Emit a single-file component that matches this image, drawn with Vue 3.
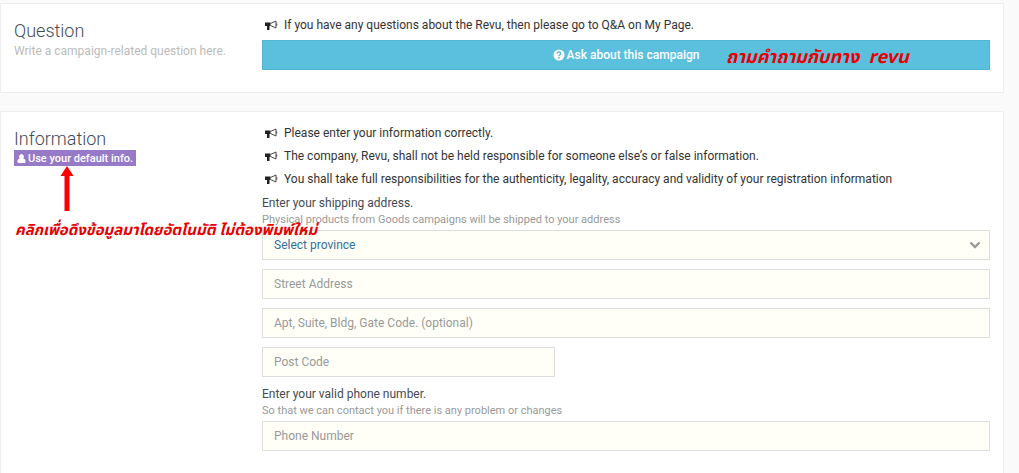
<script setup>
import { ref } from 'vue'

const notices = [
  'Please enter your information correctly.',
  'The company, Revu, shall not be held responsible for someone else’s or false information.',
  'You shall take full responsibilities for the authenticity, legality, accuracy and validity of your registration information',
]
const province = ref('')
const street = ref('')
const apt = ref('')
const postCode = ref('')
const phone = ref('')
</script>

<template>
  <main class="page">
    <section class="panel">
      <div class="side">
        <h2>Question</h2>
        <p class="sub">Write a campaign-related question here.</p>
      </div>
      <div class="body">
        <ul class="notices">
          <li>
            <svg class="horn" viewBox="0 0 13 11" aria-hidden="true">
              <path d="M0 2.500h5.500v3.500H4.500V10H2V6H0z" fill="#222" />
              <path d="M5.500 3.500L11 1v7L5.500 5.500M11.800 3.500v2" fill="none" stroke="#444" />
            </svg>
            <span>If you have any questions about the Revu, then please go to Q&amp;A on My Page.</span>
          </li>
        </ul>
        <div class="ask-row">
          <button type="button" class="ask">
            <svg class="help" viewBox="0 0 12 12" aria-hidden="true">
              <circle cx="6" cy="6" r="5.500" fill="#fff" />
              <path d="M4.200 4.600Q4.400 3 6 3T7.800 4.500Q7.800 5.300 6.900 5.800T6 7" fill="none" stroke="#5bc0de" stroke-width="1.500" />
              <path d="M5.200 8h1.600v1.500H5.200z" fill="#5bc0de" />
            </svg>
            <span>Ask about this campaign</span>
          </button>
          <span class="note note-ask" lang="th">ถามคำถามกับทาง &nbsp;revu</span>
        </div>
      </div>
    </section>

    <section class="panel grow">
      <div class="side">
        <h2>Information</h2>
        <div class="default-wrap">
          <button type="button" class="default">
            <svg class="user" viewBox="0 0 10 10" aria-hidden="true">
              <path d="M5 0a2.600 2.900 0 0 1 1.800 5Q9.500 5.300 9.500 8.500 9.500 10 8 10H2Q.5 10 .5 8.500.5 5.300 3.200 5A2.600 2.900 0 0 1 5 0z" fill="#fff" />
            </svg>
            <span>Use your default info.</span>
          </button>
          <div class="callout">
            <svg class="arrow" viewBox="0 0 14 46" aria-hidden="true">
              <path d="M7 0l6.500 10H9.500v35h-5V10H.5z" fill="#f00" />
            </svg>
            <span class="note note-info" lang="th">คลิกเพื่อดึงข้อมูลมาโดยอัตโนมัติ ไม่ต้องพิมพ์ใหม่</span>
          </div>
        </div>
      </div>
      <form class="body" @submit.prevent>
        <ul class="notices">
          <li v-for="text in notices" :key="text">
            <svg class="horn" viewBox="0 0 13 11" aria-hidden="true">
              <path d="M0 2.500h5.500v3.500H4.500V10H2V6H0z" fill="#222" />
              <path d="M5.500 3.500L11 1v7L5.500 5.500M11.800 3.500v2" fill="none" stroke="#444" />
            </svg>
            <span>{{ text }}</span>
          </li>
        </ul>
        <label class="title" for="province">Enter your shipping address.</label>
        <p class="hint">Physical products from Goods campaigns will be shipped to your address</p>
        <div class="fields">
          <div class="select">
            <select id="province" v-model="province">
              <option value="">Select province</option>
            </select>
            <svg class="chevron" viewBox="0 0 12 8" aria-hidden="true">
              <path d="M1.500 1.500L6 6l4.500-4.500" fill="none" stroke="#999" stroke-width="2.400" />
            </svg>
          </div>
          <input v-model="street" type="text" placeholder="Street Address" aria-label="Street Address" />
          <input v-model="apt" type="text" placeholder="Apt, Suite, Bldg, Gate Code. (optional)" aria-label="Apt, Suite, Bldg, Gate Code" />
          <input v-model="postCode" class="short" type="text" placeholder="Post Code" aria-label="Post Code" />
        </div>
        <label class="title phone" for="phone">Enter your valid phone number.</label>
        <p class="hint">So that we can contact you if there is any problem or changes</p>
        <div class="fields">
          <input id="phone" v-model="phone" type="tel" placeholder="Phone Number" />
        </div>
      </form>
    </section>
  </main>
</template>

<style>
body {
  margin: 0;
  background: #fafafa;
}
</style>

<style scoped>
.page {
  box-sizing: border-box;
  min-height: 100vh;
  display: flex;
  flex-direction: column;
  gap: 18px;
  padding: 3px 15px 0 0;
  font-family: Roboto, "Liberation Sans", sans-serif;
  font-size: 12px;
  color: #333;
}
.panel {
  display: grid;
  grid-template-columns: 248px minmax(0, 1fr);
  padding: 10px 13px 22px;
  background: #fff;
  border: 1px solid #eee;
}
.grow {
  flex: 1;
  border-bottom: 0;
}
h2 {
  margin: 6px 0 0;
  font-size: 18px;
  line-height: 22px;
  font-weight: 300;
  color: #434a54;
}
.sub {
  margin: 0;
  font-size: 12px;
  line-height: 18px;
  color: #bbb;
}
.notices {
  margin: 0;
  padding: 0;
  list-style: none;
}
.notices li {
  display: flex;
  align-items: center;
  gap: 6px;
  padding-left: 3px;
  line-height: 23px;
}
.horn {
  flex: none;
  width: 13px;
  height: 11px;
}
.ask-row {
  position: relative;
  margin-top: 3px;
}
.ask {
  display: flex;
  align-items: center;
  justify-content: center;
  gap: 2px;
  width: 100%;
  height: 30px;
  padding: 0;
  border: 1px solid #4fb5d3;
  background: #5bc0de;
  color: #fff;
  font: 500 12px Roboto, sans-serif;
}
.help {
  width: 12px;
  height: 12px;
}
.note {
  position: absolute;
  color: #e60000;
  font-family: "Noto Sans Thai", "Liberation Sans", sans-serif;
  font-weight: 700;
  font-style: italic;
  white-space: nowrap;
}
.note-ask {
  left: 464px;
  top: 6px;
  font-size: 18px;
  line-height: 24px;
}
.default-wrap {
  position: relative;
  width: max-content;
}
.default {
  display: flex;
  align-items: center;
  gap: 2px;
  height: 16px;
  padding: 0 3px;
  border: 0;
  background: #967ac8;
  color: #fff;
  font: 500 11px Roboto, sans-serif;
}
.user {
  width: 9px;
  height: 9px;
}
.callout {
  position: absolute;
  top: 16px;
  left: 0;
  z-index: 1;
}
.arrow {
  display: block;
  width: 14px;
  height: 46px;
  margin-left: 46px;
}
.note-info {
  left: 1px;
  top: 53px;
  font-size: 15px;
  line-height: 24px;
}
.title {
  display: block;
  font-size: 12px;
  line-height: 18px;
  margin-top: 3px;
  color: #434a54;
}
.title.phone {
  margin-top: 8px;
}
.hint {
  margin: 0 0 3px;
  font-size: 11px;
  line-height: 15px;
  color: #999;
}
.fields {
  display: grid;
  gap: 9px;
}
.select {
  position: relative;
}
input,
select {
  box-sizing: border-box;
  width: 100%;
  height: 30px;
  padding: 0 11px;
  border: 1px solid #ddd;
  border-radius: 0;
  background: #fffff8;
  font: 12px Roboto, sans-serif;
  color: #333;
}
select {
  display: block;
  appearance: none;
  color: #31709c;
}
input::placeholder {
  color: #999;
  opacity: 1;
}
.short {
  width: 293px;
}
.chevron {
  position: absolute;
  right: 9px;
  top: 11px;
  width: 12px;
  height: 8px;
  pointer-events: none;
}
</style>
